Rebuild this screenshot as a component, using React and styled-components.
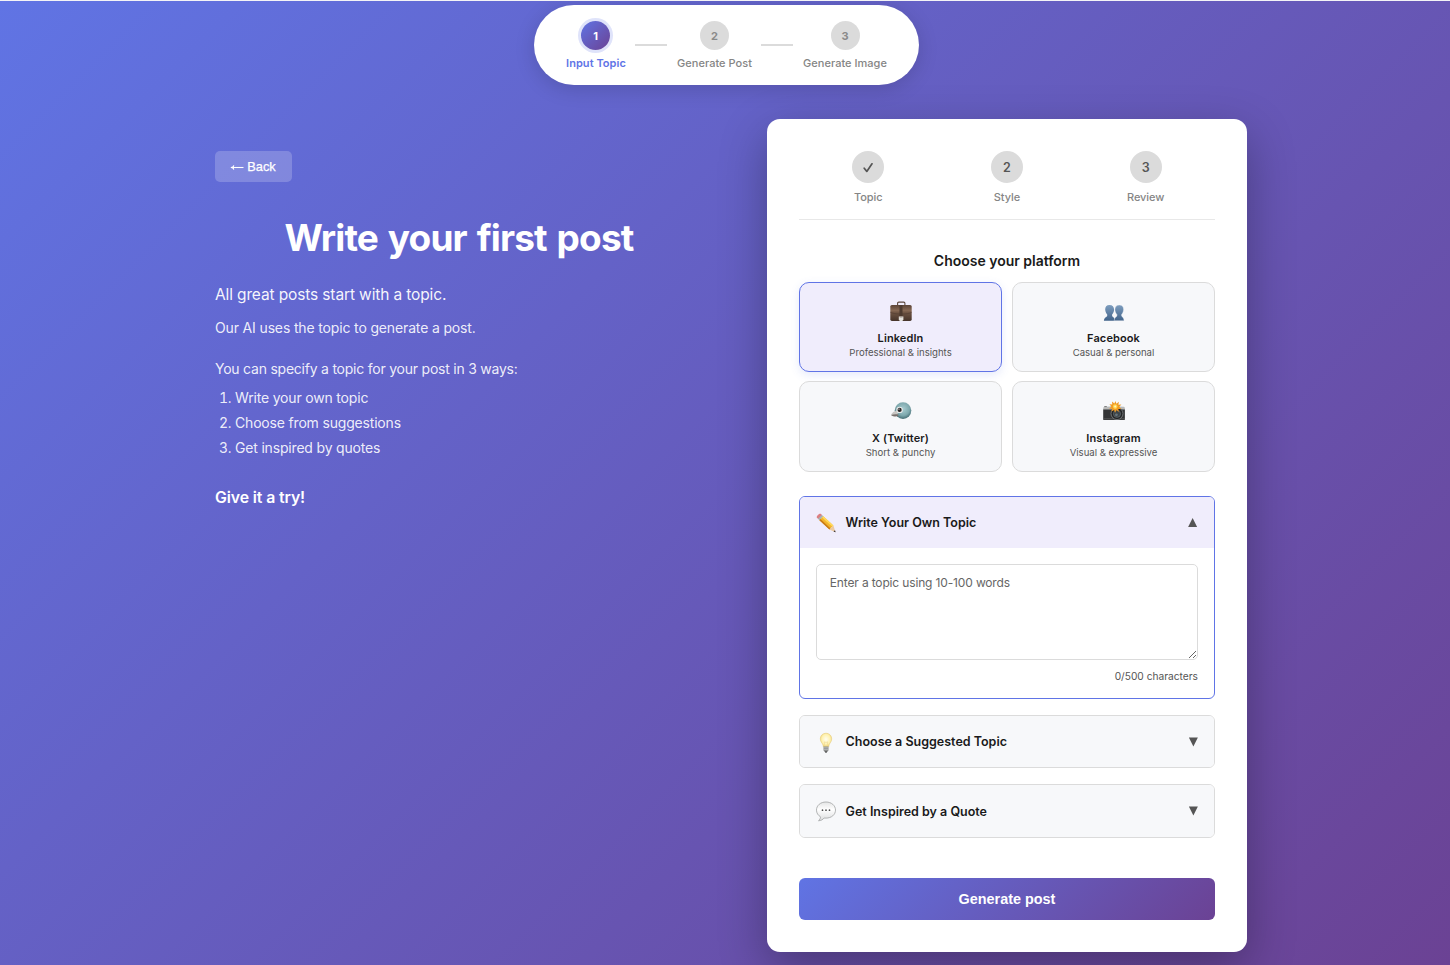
import React, { useState } from 'react'
import styled, { createGlobalStyle } from 'styled-components'

const gradient = 'linear-gradient(135deg, #6074e4 0%, #6b4294 100%)'

const GlobalStyle = createGlobalStyle`
  * {
    box-sizing: border-box;
  }
  body {
    margin: 0;
    background: #f3f3f6;
    font-family: Inter, sans-serif;
    color: #1a1a1a;
  }
`
const Page = styled.div`
  margin-top: 1px;
  height: 964px;
  overflow: hidden;
  background: ${gradient};
`
const Header = styled.header`
  display: flex;
  justify-content: center;
  padding: 4px 0 0 3px;
`
const StepPill = styled.nav`
  display: flex;
  align-items: center;
  width: 385px;
  height: 80px;
  padding: 0 32px;
  border-radius: 40px;
  background: white;
  box-shadow: 0 4px 20px rgba(0, 0, 0, 0.15);
`
const PillStep = styled.div`
  display: flex;
  flex-direction: column;
  align-items: center;
  gap: 6px;
  width: ${(props) => props.$width}px;
  padding-top: 1px;
`
const PillNumber = styled.span`
  display: flex;
  align-items: center;
  justify-content: center;
  width: 29px;
  height: 29px;
  margin-right: ${(props) => (props.$active ? '1px' : '0')};
  padding-top: 1px;
  border-radius: 50%;
  font-size: 11px;
  font-weight: 700;
  color: ${(props) => (props.$active ? 'white' : '#8a8a8a')};
  background: ${(props) => (props.$active ? gradient : '#dbdbdb')};
  box-shadow: ${(props) =>
    props.$active ? '0 0 0 3px rgba(96, 116, 230, 0.2)' : 'none'};
`
const PillLabel = styled.span`
  font-size: 11px;
  line-height: 15px;
  margin-bottom: -1px;
  font-weight: ${(props) => (props.$active ? 600 : 500)};
  letter-spacing: ${(props) => (props.$active ? '0.05px' : '0.02px')};
  color: ${(props) => (props.$active ? '#6074e6' : '#858585')};
  white-space: nowrap;
`
const PillLine = styled.span`
  width: 32px;
  height: 2px;
  margin: 0 10px 0 9px;
  background: #dbdbdb;
`
const Main = styled.main`
  display: flex;
  justify-content: space-between;
  align-items: flex-start;
  width: 1032px;
  margin: 34px 0 0 215px;
`
const Intro = styled.section`
  width: 488px;
  padding-top: 32px;
  color: white;
`
const BackButton = styled.button`
  display: block;
  width: 77px;
  height: 31px;
  padding: 0 1px 0 0;
  border: none;
  border-radius: 5px;
  background: rgba(255, 255, 255, 0.2);
  color: white;
  font-family: 'Liberation Sans', Arial, sans-serif;
  font-size: 12.8px;
  font-weight: 500;
  -webkit-text-stroke: 0.25px white;
`
const BackContent = styled.span`
  display: flex;
  align-items: center;
  justify-content: center;
  gap: 3px;
`
const Title = styled.h1`
  margin: 33px 0 0;
  font-size: 37px;
  line-height: 46px;
  font-weight: 700;
  letter-spacing: -0.87px;
  word-spacing: 2px;
  text-align: center;
`
const Lead = styled.p`
  margin: ${(props) => props.$top}px 0 0;
  font-size: ${(props) => (props.$strong ? '15.8px' : '15.5px')};
  line-height: 26px;
  font-weight: ${(props) => (props.$strong ? 600 : 400)};
  letter-spacing: ${(props) => (props.$strong ? '-0.1px' : '-0.13px')};
  color: rgba(255, 255, 255, ${(props) => (props.$strong ? 1 : 0.95)});
`
const Text = styled.p`
  margin: ${(props) => props.$top}px 0 0;
  font-size: 14px;
  line-height: 24px;
  letter-spacing: ${(props) => props.$spacing}px;
  color: rgba(255, 255, 255, 0.9);
`
const Ways = styled.ol`
  margin: 4px 0 0;
  padding-left: 20px;
  font-size: 14px;
  line-height: 25px;
  letter-spacing: -0.18px;
  color: rgba(255, 255, 255, 0.9);
`
const Card = styled.section`
  width: 480px;
  height: 833px;
  padding: 32px;
  border-radius: 13px;
  background: white;
  box-shadow: 0 16px 48px rgba(0, 0, 0, 0.3);
`
const CardSteps = styled.div`
  display: grid;
  grid-template-columns: repeat(3, 1fr);
  height: 69px;
  border-bottom: 1px solid #e8e8e8;
`
const CardStep = styled.div`
  display: flex;
  flex-direction: column;
  align-items: center;
  gap: 7px;
  font-size: 11px;
  line-height: 15px;
  font-weight: 500;
  letter-spacing: -0.05px;
  color: #858585;
`
const CardNumber = styled.span`
  display: flex;
  align-items: center;
  justify-content: center;
  width: 32px;
  height: 32px;
  padding-top: 1px;
  border-radius: 50%;
  background: #dbdbdb;
  color: #555;
  font-size: 12.5px;
  font-weight: 600;
`
const Heading = styled.h2`
  margin: 31px 0 11px;
  font-size: 14px;
  line-height: 20px;
  font-weight: 600;
  letter-spacing: -0.01px;
  text-align: center;
`
const Platforms = styled.div`
  display: grid;
  grid-template-columns: 1fr 1fr;
  grid-template-rows: 90px 91px;
  gap: 9px 10px;
`
const Platform = styled.button`
  display: flex;
  flex-direction: column;
  align-items: center;
  justify-content: center;
  padding: 5px 0 0;
  border: 1px solid ${(props) => (props.$active ? '#6074e6' : '#dbdbdb')};
  border-radius: 10px;
  background: ${(props) => (props.$active ? '#f0edfc' : '#f7f8fa')};
  box-shadow: ${(props) =>
    props.$active ? '0 3px 10px rgba(96, 116, 230, 0.16)' : 'none'};
  font-family: inherit;
`
const PlatformName = styled.span`
  margin: 7px 0 1px;
  font-size: 11px;
  line-height: 14px;
  font-weight: 600;
  letter-spacing: 0.1px;
  color: #1a1a1a;
`
const PlatformNote = styled.span`
  font-size: 9.6px;
  line-height: 13px;
  color: #555;
`
const Accordions = styled.div`
  display: flex;
  flex-direction: column;
  gap: 16px;
  margin-top: 24px;
`
const Accordion = styled.div`
  height: ${(props) => props.$height}px;
  border: 1px solid ${(props) => (props.$open ? '#6074e6' : '#dbdbdb')};
  border-radius: 6px;
  background: white;
  overflow: hidden;
`
const AccordionHeader = styled.button`
  display: flex;
  align-items: center;
  gap: 9.6px;
  width: 100%;
  height: ${(props) => (props.$open ? '51px' : '100%')};
  padding: 0 16px;
  border: none;
  background: ${(props) => (props.$open ? '#f0edfc' : '#f7f8fa')};
  font-family: inherit;
  text-align: left;
`
const AccordionTitle = styled.span`
  flex: 1;
  font-size: 12.5px;
  font-weight: 600;
  letter-spacing: 0;
  color: #1a1a1a;
`
const AccordionBody = styled.div`
  padding: 16px;
`
const TopicInput = styled.textarea`
  display: block;
  width: 100%;
  height: 96px;
  padding: 9px 12.8px;
  border: 1px solid #dbdbdb;
  border-radius: 5px;
  background: white;
  font-family: inherit;
  font-size: 12px;
  line-height: 18px;
  letter-spacing: -0.15px;
  resize: vertical;
  outline: none;
  &::placeholder {
    color: #666;
  }
`
const Counter = styled.div`
  margin-top: 9px;
  font-size: 10.2px;
  line-height: 14px;
  text-align: right;
  color: #555;
`
const SubmitButton = styled.button`
  width: 100%;
  height: 42px;
  margin-top: 40px;
  border: none;
  border-radius: 6px;
  background: ${gradient};
  color: white;
  font-family: 'Liberation Sans', Arial, sans-serif;
  font-size: 14.4px;
  font-weight: 700;
`

const BackArrow = () => (
  <svg width="14" height="10" viewBox="0 0 14 10" fill="none">
    <path d="M1 5.5h12.5" stroke="white" strokeWidth="1.1" />
    <path d="M4 3C3.3 4.4 2.3 5.2.8 5.5 2.3 5.8 3.3 6.6 4 8" fill="white" stroke="white" strokeWidth=".6" />
  </svg>
)
const Check = () => (
  <svg width="12" height="12" viewBox="0 0 12 12" fill="none">
    <path
      d="M2.2 6.2l2.6 3.200L10 1.800"
      stroke="#555"
      strokeWidth="1.7"
      strokeLinecap="round"
      strokeLinejoin="round"
    />
  </svg>
)
const Arrow = ({ up }) => (
  <svg width="10" height="10" viewBox="0 0 10 10">
    <path d={up ? 'M.1 8.9L4.6.1l4.5 8.8z' : 'M.9.6h9L5.4 9.500z'} fill="#555" />
  </svg>
)

const Briefcase = () => (
  <svg width="24" height="24" viewBox="0 0 24 24">
    <defs>
      <linearGradient id="leather" x2="0" y2="1">
        <stop offset="0" stopColor="#5a4336" />
        <stop offset=".35" stopColor="#866853" />
        <stop offset=".5" stopColor="#6d5342" />
        <stop offset="1" stopColor="#46342a" />
      </linearGradient>
    </defs>
    <path d="M8.6 6V3.3c0-.8.5-1.2 1.2-1.2h4.9c.7 0 1.2.4 1.2 1.2V6" fill="none" stroke="#5b473c" strokeWidth="1.1" />
    <rect x="1.3" y="4.9" width="21.4" height="16" rx="1.6" fill="url(#leather)" />
    <path d="M1.3 12.3c3 1.2 6 1.7 9.5 1.7h3c3.4 0 6.6-.5 8.9-1.7" fill="none" stroke="#4c392e" strokeWidth=".5" />
    <rect x="10.5" y="5" width="3" height="11" fill="#4d3a2f" />
    <path d="M9.8 16.500h4.600v3l-1 1.400h-2.600l-1-1.400z" fill="#e5e2dd" />
    <path d="M10.7 17.500h2.800" stroke="#aaa39b" strokeWidth=".6" />
  </svg>
)
const People = () => (
  <svg width="24" height="24" viewBox="0 0 24 24">
    <defs>
      <linearGradient id="bust" x2="0" y2="1">
        <stop offset="0" stopColor="#7d9dbe" />
        <stop offset="1" stopColor="#41638a" />
      </linearGradient>
    </defs>
    <path
      d="M7.5 5C4.5 5 3.1 7 3.2 9.5c.1 2.2.9 3.8 2 4.9v1.5c-.4 1-3.1 1.200-3.300 4.900h10.900c0-3.500-2.300-3.900-2.700-4.900v-1.500c1.100-1.100 2-2.700 2-4.900C12 7 10.5 5 7.500 5z"
      fill="url(#bust)"
    />
    <path
      d="M17.3 5c-3 0-4.400 2-4.400 4.500 0 2.200.9 3.800 2 4.900v1.500c-.4 1-2.700 1.400-2.700 4.900h9.900c-.2-3.700-2.100-3.900-2.500-4.900v-1.500c1.100-1.100 1.900-2.700 2-4.900C21.700 7 20.300 5 17.300 5z"
      fill="url(#bust)"
      stroke="#f7f8fa"
      strokeWidth=".4"
    />
  </svg>
)
const Bird = () => (
  <svg width="24" height="24" viewBox="0 0 24 24">
    <defs>
      <radialGradient id="bird" cx=".5" cy=".4" r=".6">
        <stop offset="0" stopColor="#a9ccd0" />
        <stop offset=".65" stopColor="#7fa9ae" />
        <stop offset="1" stopColor="#456d74" />
      </radialGradient>
    </defs>
    <circle cx="14" cy="10.6" r="8.3" fill="url(#bird)" />
    <path d="M8.2 10.5C5 11.2 3 12.6 2 15c2.3.5 4.7 1 7.2.9z" fill="#c9c6c3" />
    <path d="M2 15c2.300-.9 4.700-1 7-.7l.3 1.800C6.800 17 4 16.700 2 15z" fill="#77706c" />
    <circle cx="10.6" cy="9.9" r="3.2" fill="#e9eceb" />
    <circle cx="10.6" cy="9.9" r="2.1" fill="#2a2524" />
    <circle cx="10" cy="9.1" r=".6" fill="white" />
  </svg>
)
const Camera = () => (
  <svg width="24" height="24" viewBox="0 0 24 24">
    <path d="M1.2 8.3c0-1 .5-1.5 1.5-1.6l5.6-.3 1.7-2h5l1.8 2 4.6.3c1 0 1.5.6 1.5 1.6V10H1.2z" fill="#b9bab9" />
    <path d="M2.3 6.5h2.5" stroke="#767676" strokeWidth=".9" />
    <path d="M1.2 9.5h21.7v9.7c0 .6-.4.9-.9.9H2.1c-.5 0-.9-.3-.9-.9z" fill="#343536" />
    <path d="M1.2 18.8h21.7" stroke="#666" strokeWidth=".7" />
    <circle cx="15" cy="13.600" r="6" fill="#232526" stroke="#777b7d" strokeWidth=".9" />
    <circle cx="15" cy="13.8" r="3.6" fill="#3d4448" stroke="#656d71" strokeWidth=".7" />
    <circle cx="14.4" cy="14.8" r="1.4" fill="#66747b" />
    <path
      d="M13.4 1l1 2.7 2.5-2-.5 3.1 3-.2-2.1 2.2 2.1 2.3-3.1-.2.5 3-2.4-1.900-1.300 2.700-1-2.700-2.600 1.600.6-2.900-2.900.1 2.200-2.400-2-2.200 2.900.3-.3-3 2.400 1.900z"
      fill="#f19b23"
    />
    <circle cx="13.2" cy="6.6" r="2.3" fill="#ffd44d" />
    <circle cx="13.2" cy="6.6" r="1" fill="#fff7c4" />
  </svg>
)
const Pencil = () => (
  <svg width="20" height="20" viewBox="0 0 20 20">
    <path d="M.8 4.6C-.1 3.5 3.4-.1 4.7.8l1.6 1.500-3.900 3.900z" fill="#dc7f82" />
    <path d="M2 5.8L5.8 1.9l1.5 1.4-3.900 3.900z" fill="#a7b3b4" />
    <path d="M3.4 7.2l3.9-3.9 10.1 9.3-4 3.8z" fill="#f4b52a" />
    <path d="M3.4 7.2l1.1-1.1 10.1 9.3-1.2 1z" fill="#c97b18" />
    <path d="M6.2 4.4l1.1-1.1 10.1 9.3-1.1 1.1z" fill="#ffd95c" />
    <path d="M13.4 16.4l4-3.8 2.1 6.6z" fill="#ecc9a0" />
    <path d="M17.5 18.5l1.5-1.3.6 2.1z" fill="#2d2a2a" />
  </svg>
)
const Bulb = () => (
  <svg width="20" height="24" viewBox="0 -1 20 24">
    <defs>
      <radialGradient id="glass" cx=".5" cy=".45" r=".6">
        <stop offset="0" stopColor="#fffdf0" />
        <stop offset=".6" stopColor="#fff2b0" />
        <stop offset="1" stopColor="#eccb66" />
      </radialGradient>
    </defs>
    <g transform="translate(0 .8)">
      <path
        d="M10 1.4c-3.5 0-5.7 2.5-5.7 5.6 0 2.6 1.5 3.9 2.3 5.4.5 1 .5 1.7.7 2.6h5.4c.2-.9.2-1.6.7-2.6.8-1.5 2.3-2.8 2.3-5.4 0-3.1-2.2-5.6-5.7-5.6z"
        fill="url(#glass)"
        stroke="#e2c878"
        strokeWidth=".5"
      />
      <path d="M8.9 14.5L8.3 10l1.7.7 1.7-.7-.6 4.5" fill="none" stroke="#ead38a" strokeWidth=".5" />
      <path d="M7.5 14.7h5v3.6c0 .8-.6 1.3-1.2 1.6-.5 1-2.1 1-2.6 0-.6-.3-1.2-.8-1.2-1.6z" fill="#8d8f8e" />
      <path d="M7.5 16h5M7.5 17.6h5" stroke="#d0d1cf" strokeWidth=".6" />
      <path d="M8.7 19.6h2.6l-.5 1H9.2z" fill="#3b3b3b" />
    </g>
  </svg>
)
const Bubble = () => (
  <svg width="20" height="22" viewBox="0 -1.5 20 22">
    <defs>
      <linearGradient id="bubble" x2="0" y2="1">
        <stop offset="0" stopColor="#e4e5e5" />
        <stop offset=".4" stopColor="#fff" />
        <stop offset="1" stopColor="#dcddde" />
      </linearGradient>
    </defs>
    <path
      d="M10 .5C4.600.5.5 3.900.5 8.600c0 3 1.600 5.300 4 6.700.1 1.500-.7 2.800-2 3.900 2.400 0 4.400-1 5.600-2.700.6.1 1.300.1 1.900.1 5.400 0 9.500-3.400 9.500-8S15.400.5 10 .5z"
      fill="url(#bubble)"
      stroke="#a9abac"
      strokeWidth=".9"
    />
    <circle cx="6.5" cy="8.7" r=".85" fill="#4c4c4c" />
    <circle cx="10" cy="8.7" r=".85" fill="#4c4c4c" />
    <circle cx="13.5" cy="8.7" r=".85" fill="#4c4c4c" />
  </svg>
)

const platforms = [
  { name: 'LinkedIn', note: 'Professional & insights', Icon: Briefcase },
  { name: 'Facebook', note: 'Casual & personal', Icon: People },
  { name: 'X (Twitter)', note: 'Short & punchy', Icon: Bird },
  { name: 'Instagram', note: 'Visual & expressive', Icon: Camera },
]

function App() {
  const [platform, setPlatform] = useState('LinkedIn')
  const [topic, setTopic] = useState('')

  return (
    <>
      <GlobalStyle />
      <Page>
        <Header>
          <StepPill>
            <PillStep $width={60}>
              <PillNumber $active>1</PillNumber>
              <PillLabel $active>Input Topic</PillLabel>
            </PillStep>
            <PillLine />
            <PillStep $width={75}>
              <PillNumber>2</PillNumber>
              <PillLabel>Generate Post</PillLabel>
            </PillStep>
            <PillLine />
            <PillStep $width={84}>
              <PillNumber>3</PillNumber>
              <PillLabel>Generate Image</PillLabel>
            </PillStep>
          </StepPill>
        </Header>
        <Main>
          <Intro>
            <BackButton>
              <BackContent>
                <BackArrow /> Back
              </BackContent>
            </BackButton>
            <Title>Write your first post</Title>
            <Lead $top={21}>All great posts start with a topic.</Lead>
            <Text $top={8} $spacing={-0.15}>
              Our AI uses the topic to generate a post.
            </Text>
            <Text $top={17} $spacing={-0.23}>
              You can specify a topic for your post in 3 ways:
            </Text>
            <Ways>
              <li>Write your own topic</li>
              <li>Choose from suggestions</li>
              <li>Get inspired by quotes</li>
            </Ways>
            <Lead $top={25} $strong>
              Give it a try!
            </Lead>
          </Intro>
          <Card>
            <CardSteps>
              <CardStep>
                <CardNumber>
                  <Check />
                </CardNumber>
                Topic
              </CardStep>
              <CardStep>
                <CardNumber>2</CardNumber>
                Style
              </CardStep>
              <CardStep>
                <CardNumber>3</CardNumber>
                Review
              </CardStep>
            </CardSteps>
            <Heading>Choose your platform</Heading>
            <Platforms>
              {platforms.map(({ name, note, Icon }) => (
                <Platform
                  key={name}
                  $active={name === platform}
                  onClick={() => setPlatform(name)}
                >
                  <Icon />
                  <PlatformName>{name}</PlatformName>
                  <PlatformNote>{note}</PlatformNote>
                </Platform>
              ))}
            </Platforms>
            <Accordions>
              <Accordion $open $height={203}>
                <AccordionHeader $open>
                  <Pencil />
                  <AccordionTitle>Write Your Own Topic</AccordionTitle>
                  <Arrow up />
                </AccordionHeader>
                <AccordionBody>
                  <TopicInput
                    placeholder="Enter a topic using 10-100 words"
                    value={topic}
                    onChange={(e) => setTopic(e.target.value)}
                  />
                  <Counter>{topic.length}/500 characters</Counter>
                </AccordionBody>
              </Accordion>
              <Accordion $height={53}>
                <AccordionHeader>
                  <Bulb />
                  <AccordionTitle>Choose a Suggested Topic</AccordionTitle>
                  <Arrow />
                </AccordionHeader>
              </Accordion>
              <Accordion $height={54}>
                <AccordionHeader>
                  <Bubble />
                  <AccordionTitle>Get Inspired by a Quote</AccordionTitle>
                  <Arrow />
                </AccordionHeader>
              </Accordion>
            </Accordions>
            <SubmitButton>Generate post</SubmitButton>
          </Card>
        </Main>
      </Page>
    </>
  )
}

export default App
